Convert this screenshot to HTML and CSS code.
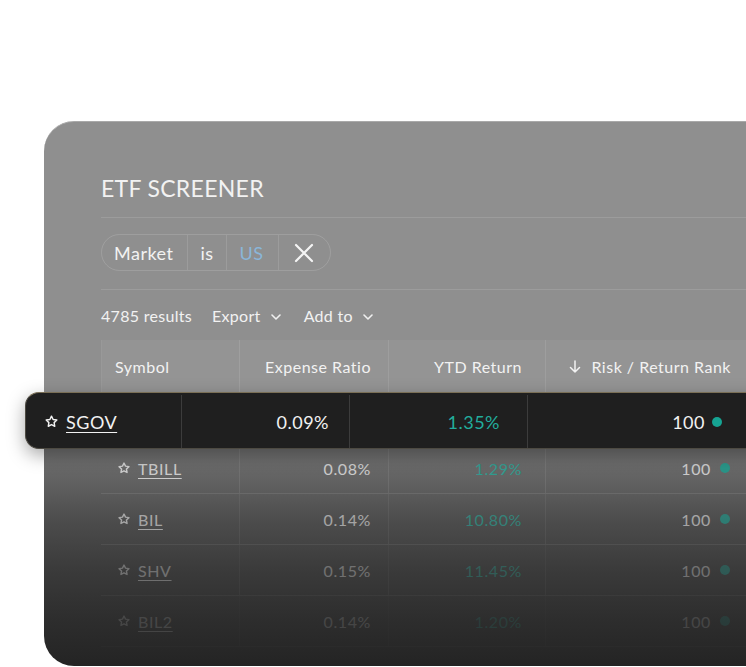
FILE: index.html
```html
<!DOCTYPE html>
<html lang="en">
<head>
  <meta charset="UTF-8" />
  <title>ETF Screener</title>
  <link rel="stylesheet" href="styles.css">
</head>
<body>
  <div class="card">
    <h1 class="title">ETF SCREENER</h1>

    <div class="filters">
      <div class="pill">
        <span class="seg seg-field">Market</span>
        <span class="seg seg-op">is</span>
        <span class="seg seg-value">US</span>
        <span class="seg seg-clear">
          <svg width="20" height="20" viewBox="0 0 20 20"><path d="M2 2L18 18M18 2L2 18" stroke="#f4f4f4" stroke-width="2.2" stroke-linecap="round"/></svg>
        </span>
      </div>
    </div>

    <div class="toolbar">
      <span class="count">4785 results</span>
      <span class="menu">Export
        <svg width="10" height="6" viewBox="0 0 10 6"><path d="M1 1l4 4 4-4" fill="none" stroke="#f0f0f0" stroke-width="1.6" stroke-linecap="round" stroke-linejoin="round"/></svg>
      </span>
      <span class="menu">Add to
        <svg width="10" height="6" viewBox="0 0 10 6"><path d="M1 1l4 4 4-4" fill="none" stroke="#f0f0f0" stroke-width="1.6" stroke-linecap="round" stroke-linejoin="round"/></svg>
      </span>
    </div>

    <div class="table">
      <div class="row head">
        <div class="cell c-sym">Symbol</div>
        <div class="cell num">Expense Ratio</div>
        <div class="cell num">YTD Return</div>
        <div class="cell num">
          <svg class="sort" width="12" height="13" viewBox="0 0 12 13"><path d="M6 1v11M1.5 7.5L6 12l4.5-4.5" fill="none" stroke="#f2f2f2" stroke-width="1.5" stroke-linecap="round" stroke-linejoin="round"/></svg>
          Risk / Return Rank
        </div>
      </div>

      <div class="row body-row spacer"></div>

      <div class="row body-row fade-1">
        <div class="cell c-sym"><svg class="star" width="14" height="14" viewBox="0 0 24 24"><path d="M12 3.5l2.6 5.3 5.9.9-4.3 4.1 1 5.8L12 16.9l-5.2 2.7 1-5.8-4.3-4.1 5.9-.9z" fill="none" stroke="currentColor" stroke-width="2.5" stroke-linejoin="round"/></svg><a>TBILL</a></div>
        <div class="cell num">0.08%</div>
        <div class="cell num teal">1.29%</div>
        <div class="cell num">100<span class="dot"></span></div>
      </div>

      <div class="row body-row fade-2">
        <div class="cell c-sym"><svg class="star" width="14" height="14" viewBox="0 0 24 24"><path d="M12 3.5l2.6 5.3 5.9.9-4.3 4.1 1 5.8L12 16.9l-5.2 2.7 1-5.8-4.3-4.1 5.9-.9z" fill="none" stroke="currentColor" stroke-width="2.5" stroke-linejoin="round"/></svg><a>BIL</a></div>
        <div class="cell num">0.14%</div>
        <div class="cell num teal">10.80%</div>
        <div class="cell num">100<span class="dot"></span></div>
      </div>

      <div class="row body-row fade-3">
        <div class="cell c-sym"><svg class="star" width="14" height="14" viewBox="0 0 24 24"><path d="M12 3.5l2.6 5.3 5.9.9-4.3 4.1 1 5.8L12 16.9l-5.2 2.7 1-5.8-4.3-4.1 5.9-.9z" fill="none" stroke="currentColor" stroke-width="2.5" stroke-linejoin="round"/></svg><a>SHV</a></div>
        <div class="cell num">0.15%</div>
        <div class="cell num teal">11.45%</div>
        <div class="cell num">100<span class="dot"></span></div>
      </div>

      <div class="row body-row fade-4">
        <div class="cell c-sym"><svg class="star" width="14" height="14" viewBox="0 0 24 24"><path d="M12 3.5l2.6 5.3 5.9.9-4.3 4.1 1 5.8L12 16.9l-5.2 2.7 1-5.8-4.3-4.1 5.9-.9z" fill="none" stroke="currentColor" stroke-width="2.5" stroke-linejoin="round"/></svg><a>BIL2</a></div>
        <div class="cell num">0.14%</div>
        <div class="cell num teal">1.20%</div>
        <div class="cell num">100<span class="dot"></span></div>
      </div>

      <!-- highlighted row, lifted over the first table row -->
      <div class="popout">
        <div class="pcell p-sym"><svg class="star" width="15" height="15" viewBox="0 0 24 24"><path d="M12 3.5l2.6 5.3 5.9.9-4.3 4.1 1 5.8L12 16.9l-5.2 2.7 1-5.8-4.3-4.1 5.9-.9z" fill="none" stroke="currentColor" stroke-width="2.3" stroke-linejoin="round"/></svg><a>SGOV</a></div>
        <div class="pcell p-exp">0.09%</div>
        <div class="pcell p-ytd teal">1.35%</div>
        <div class="pcell p-rank">100<span class="dot"></span></div>
      </div>
    </div>
  </div>
</body>
</html>
```
FILE: styles.css
```css
body {
  margin: 0;
  height: 667px;
  overflow: hidden;
  background: #fff;
  font-family: 'Lato', 'Noto Sans', sans-serif;
}

.card {
  margin: 121px 0 0 44px;
  width: 760px;
  box-sizing: border-box;
  padding: 52px 0 19px 57px;
  border-top: 1px solid #a9a9a9;
  border-radius: 30px 0 0 30px;
  color: #f2f2f2;
  letter-spacing: 0.4px;
  background: linear-gradient(180deg,
    #8f8f8f 0px,
    #8f8f8f 270px,
    #6c6c6c 339px,
    #4c4c4c 399px,
    #3a3a3a 449px,
    #2d2d2d 499px,
    #242424 100%);
}

.title {
  margin: 0;
  font-size: 23px;
  font-weight: 400;
  line-height: 28px;
  letter-spacing: 0.3px;
  padding-bottom: 15px;
  border-bottom: 1px solid rgba(255,255,255,0.12);
}

.filters {
  padding: 16px 0 18px;
  border-bottom: 1px solid rgba(255,255,255,0.12);
}

.pill {
  display: inline-flex;
  height: 37px;
  box-sizing: border-box;
  border: 1.5px solid rgba(255,255,255,0.14);
  border-radius: 19px;
  font-size: 18px;
  letter-spacing: 0.5px;
}

.seg {
  display: flex;
  align-items: center;
  border-right: 1px solid rgba(255,255,255,0.12);
}
.seg-field { padding: 0 14px 0 12px; }
.seg-op { padding: 0 12px 0 12px; }
.seg-value { padding: 0 14px 0 13px; color: #8ab6d9; }
.seg-clear { padding: 0 16px 0 15px; border-right: none; }

.toolbar {
  display: flex;
  align-items: center;
  gap: 20px;
  padding-top: 16px;
  height: 20px;
  font-size: 16px;
  line-height: 20px;
  letter-spacing: 0.3px;
  margin-bottom: 14px;
}
.menu {
  display: flex;
  align-items: center;
  gap: 10px;
}
.menu + .menu { margin-left: 3px; }
.menu svg { margin-top: 1px; }

.table {
  position: relative;
  width: 645px;
}

.row {
  display: grid;
  grid-template-columns: 139px 149px 157px 200px;
}

.head {
  height: 52px;
  background: rgba(255,255,255,0.05);
  font-size: 16px;
  letter-spacing: 0.5px;
}
.head .cell { border-right: 1px solid rgba(255,255,255,0.1); }
.head .cell:first-child { border-left: 1px solid rgba(255,255,255,0.05); padding-left: 13px; }
.head .cell:last-child { border-right: none; }

.cell {
  display: flex;
  align-items: center;
  padding: 0 17px;
}
.num { justify-content: flex-end; }
.head .num:nth-child(3), .body-row .num:nth-child(3) { padding-right: 23px; }
.head .num:last-child { padding-right: 15px; }
.sort { margin-right: 10px; }

.body-row {
  height: 50px;
  border-bottom: 1px solid rgba(255,255,255,0.12);
  font-size: 16px;
  letter-spacing: 0.6px;
  color: #eeeeee;
}
.body-row .cell { border-right: 1px solid rgba(255,255,255,0.1); }
.body-row .cell:last-child { border-right: none; padding-right: 16px; }
.body-row .c-sym { padding-left: 16px; }
.body-row .star { margin-right: 7px; }

.fade-1 { opacity: 0.75; }
.fade-2 { opacity: 0.55; }
.fade-3 { opacity: 0.3; }
.fade-4 { opacity: 0.13; }

a {
  text-decoration: underline;
  text-decoration-thickness: 1px;
  text-underline-offset: 3px;
}

.teal { color: #22ad9d; }

.dot {
  display: inline-block;
  width: 10px;
  height: 10px;
  border-radius: 50%;
  background: #16a493;
  margin-left: 9px;
}

.popout {
  position: absolute;
  top: 52px;
  left: -76px;
  width: 760px;
  height: 57px;
  box-sizing: border-box;
  padding-top: 2px;
  display: flex;
  background: #1f1f1f;
  border: 1px solid #4d4a42;
  border-top-color: #7a6f56;
  border-right: none;
  border-radius: 14px 0 0 14px;
  box-shadow: 0 6px 18px rgba(0,0,0,0.35);
  font-size: 18px;
  letter-spacing: 0.5px;
  color: #f2f2f2;
}
.pcell {
  display: flex;
  align-items: center;
  border-right: 1px solid #3c3c3c;
}
.p-sym { width: 156px; padding-left: 18px; box-sizing: border-box; }
.p-sym .star { margin-right: 7px; }
.p-exp { width: 168px; justify-content: flex-end; padding-right: 20px; box-sizing: border-box; }
.p-ytd { width: 178px; justify-content: flex-end; padding-right: 27px; box-sizing: border-box; }
.p-rank { width: 218px; justify-content: flex-end; padding-right: 24px; box-sizing: border-box; border-right: none; }
.p-rank .dot { margin-left: 7px; }
```
